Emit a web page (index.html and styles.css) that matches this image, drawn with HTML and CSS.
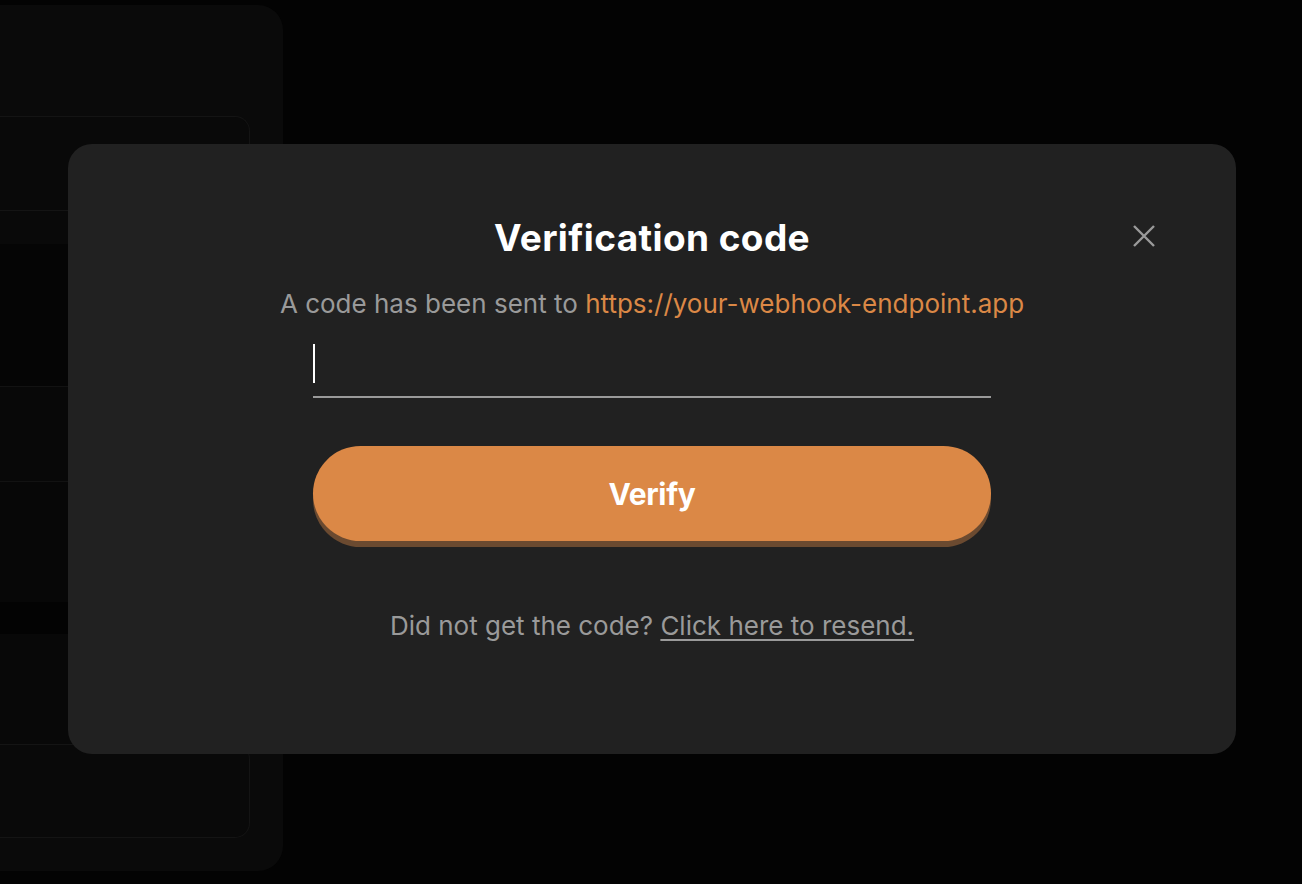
FILE: index.html
```html
<!DOCTYPE html>
<html lang="en">
<head>
<meta charset="utf-8">
<title>Verification code</title>
<link rel="stylesheet" href="styles.css">
</head>
<body>
<aside class="sidebar">
  <div class="panel">
    <div class="block block-top">
      <div class="row row-a"></div>
      <div class="row row-b"></div>
    </div>
    <div class="gap gap-1"></div>
    <div class="row row-c"></div>
    <div class="row row-d"></div>
    <div class="gap gap-2"></div>
    <div class="row row-e"></div>
    <div class="block block-bottom"></div>
  </div>
</aside>

<div class="modal" role="dialog" aria-labelledby="title">
  <button class="close" aria-label="Close">
    <svg width="22" height="22" viewBox="0 0 22 22" fill="none" stroke="#9a9a9a" stroke-width="2.4" stroke-linecap="butt">
      <path d="M1 1 L21 21 M21 1 L1 21"/>
    </svg>
  </button>
  <h1 id="title" class="title">Verification code</h1>
  <p class="sub">A code has been sent to <span class="accent">https://your-webhook-endpoint.app</span></p>
  <div class="field"><span class="caret"></span></div>
  <button class="verify">Verify</button>
  <p class="resend">Did not get the code? <a href="#">Click here to resend.</a></p>
</div>
</body>
</html>
```

FILE: styles.css
```css
* { box-sizing: border-box; }
html, body { height: 100%; }
body {
  margin: 0;
  background: #030303;
  overflow: hidden;
  font-family: Inter, "Liberation Sans", sans-serif;
}

.sidebar {
  margin-top: 5px;
  margin-left: -25px;
  width: 308px;
  height: 866px;
  background: #0a0a0a;
  border-radius: 25px;
  padding: 111px 33px 0 0;
}
.panel { display: flex; flex-direction: column; }
.block-top {
  border-top: 1px solid #141414;
  border-right: 1px solid #141414;
  border-top-right-radius: 15px;
  background: #090909;
}
.row-a { height: 94px; border-bottom: 1px solid #141414; }
.row-b { height: 33px; }
.gap-1 { height: 142px; background: #050505; }
.row-c { height: 95px; border-top: 1px solid #121212; background: #080808; }
.row-d { height: 121px; border-top: 1px solid #121212; background: #070707; }
.gap-2 { height: 32px; background: #030303; }
.row-e { height: 110px; background: #080808; }
.block-bottom {
  height: 94px;
  border: 1px solid #141414;
  border-left: none;
  border-radius: 0 15px 15px 0;
  background: #090909;
}

.modal {
  position: fixed;
  left: 68px;
  top: 144px;
  width: 1168px;
  height: 610px;
  background: #212121;
  border-radius: 24px;
  display: flex;
  flex-direction: column;
  align-items: center;
  padding-top: 72px;
}
.close {
  position: absolute;
  top: 81px;
  left: 1065px;
  width: 22px;
  height: 22px;
  padding: 0;
  border: none;
  background: none;
  display: block;
}
.close svg { display: block; }

.title {
  margin: 0;
  color: #fff;
  font-size: 37px;
  font-weight: 700;
  line-height: 44px;
  letter-spacing: 0.4px;
}
.sub {
  margin: 27px 0 0;
  font-size: 26px;
  line-height: 34px;
  color: #9a9a9a;
}
.accent { color: #db8846; }

.field {
  width: 678px;
  height: 66px;
  margin-top: 11px;
  border-bottom: 2px solid #9a9a9a;
  padding-top: 12px;
}
.caret {
  display: block;
  width: 2px;
  height: 39px;
  background: #fff;
}

.verify {
  margin-top: 48px;
  width: 678px;
  height: 95px;
  flex-shrink: 0;
  border: none;
  border-radius: 48px;
  background: #db8846;
  box-shadow: 0 6px 0 #6b4a30;
  color: #fff;
  font-family: inherit;
  font-size: 30px;
  font-weight: 700;
  letter-spacing: -0.3px;
}

.resend {
  margin: 68px 0 0;
  font-size: 26px;
  line-height: 34px;
  color: #9a9a9a;
}
.resend a { color: #9a9a9a; text-decoration: underline; text-underline-offset: 4px; text-decoration-thickness: 2px; }
```
